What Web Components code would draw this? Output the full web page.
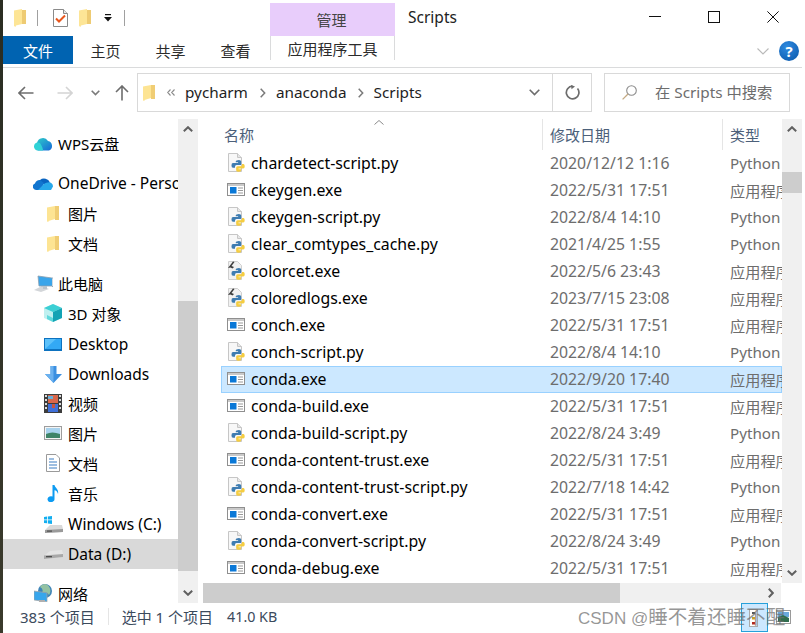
<!DOCTYPE html>
<html lang="zh"><head><meta charset="utf-8"><title>Scripts</title>
<style>
html,body{margin:0;padding:0;width:805px;height:633px;overflow:hidden;background:#fff}
body{font-family:"Noto Sans","Noto Sans CJK SC",sans-serif;font-size:15px;color:#000}
</style></head><body>
<x-explorer></x-explorer>
<script>
const LOGO=`<g transform="translate(2.3 3.1) scale(.78)"><path d="M7 7 Q7 5 11 5 Q14 5 14 7V10 Q14 11.5 12 11.5H8Q6 11.5 6 13.5V15H3.5 Q1.5 15 1.5 12 Q1.5 9 3.5 9H10V8H7Z" fill="#3e7cb1"/><path d="M17 10 Q18.5 10.5 18.5 13 Q18.5 16 16.5 16H10.5V17H14V18 Q14 20 10.5 20 Q7.5 20 7.5 18V15 Q7.5 13 9.5 13H13 Q15 13 15 11V10Z" fill="#f5cd41"/></g>`;
const ICONS={
folder:[12,17,`<path d="M0 2.5 L8 1 V14 L1.5 16 L1.5 17 L0 16.5Z" fill="#fde493"/><path d="M8 1 H12 V15 H8Z" fill="#f0cd74"/>`],
qfolder:[12,18,`<path d="M0 1.5 L8 0 V15 L2 16.5 L1.5 18 L0 17Z" fill="#fde596"/><path d="M8 1 H12 V15 H8Z" fill="#eecb73"/>`],
check:[15,18,`<path d="M.5.5H10.5L14.5 4.5V17.5H.5Z" fill="#fff" stroke="#8a8a8a"/><path d="M10.5.5V4.5H14.5" fill="#e8e8e8" stroke="#8a8a8a"/><path d="M3 9.5 L6 12.5 L12 6.5" fill="none" stroke="#e8561c" stroke-width="2"/>`],
wps:[19,15,`<defs><linearGradient id="g" x1="0" y1="0" x2="1" y2="1"><stop offset="0" stop-color="#2ed0c8"/><stop offset="1" stop-color="#1668d8"/></linearGradient></defs><path d="M4 14.5A4 4 0 0 1 3 7 6 6 0 0 1 14 5 5 5 0 0 1 15 14.5Z" fill="url(#g)"/><path d="M0 10 A4 4 0 0 1 6 7 C8 10 9 13 9 14.5H4A4 4 0 0 1 0 10Z" fill="#2fd2d6"/>`],
onedrive:[20,13,`<path d="M7 3 A6.5 6.5 0 0 1 17 5.5 L12 8 L7 6Z" fill="#0a64c0"/><path d="M3 13A3.3 3.3 0 0 1 2 6.6 5 5 0 0 1 7 3 L11 6 L8 13Z" fill="#1175cf"/><path d="M5 13 L11 7 A5 5 0 0 1 15 5.5 A4 4 0 0 1 20 9.5 L18 13Z" fill="#28a8ea"/>`],
pc:[19,17,`<path d="M0 15 L8 11 L15 14 L7 17Z" fill="#d3d6d9"/><path d="M4 1 L18 3 V11 L5 11Z" fill="#3aa5ea"/><path d="M4 1 L18 3 L19 3 V12 L18 11 H5Z" fill="none" stroke="#8ca0b0" stroke-width=".8"/><path d="M9 11 H13 V14 H9Z" fill="#b9c3cb"/>`],
cube:[18,18,`<path d="M9 0 L18 4 V14 L9 18 L0 14 V4Z" fill="#bff0f0"/><path d="M9 0 L18 4 L9 8 L0 4Z" fill="#3ccfd4"/><path d="M9 8 L18 4 V14 L9 18Z" fill="#13a3b4"/><path d="M3 11 L9 14 V18 L3 15Z" fill="#60d9dc"/>`],
desktop:[18,13,`<rect width="18" height="13" fill="#0d72bf"/><rect x="1" y="1" width="16" height="10" fill="#33a9f5"/><path d="M1 11 L12 1 H1Z" fill="#5cc1fa"/>`],
down:[17,17,`<path d="M5.5 0 H11.5 V8 H17 L8.5 17 L0 8 H5.5Z" fill="#3b8fe0"/><path d="M5.5 0 H8.5 V17 L0 8 H5.5Z" fill="#6bb1ef"/>`],
video:[18,19,`<rect width="18" height="19" fill="#3d3d3d"/><g fill="#ddd"><rect x="1" y="1" width="2" height="2"/><rect x="1" y="5" width="2" height="2"/><rect x="1" y="9" width="2" height="2"/><rect x="1" y="13" width="2" height="2"/><rect x="15" y="1" width="2" height="2"/><rect x="15" y="5" width="2" height="2"/><rect x="15" y="9" width="2" height="2"/><rect x="15" y="13" width="2" height="2"/></g><rect x="4" y="1" width="10" height="8" fill="#d9674a"/><rect x="4" y="2" width="5" height="3" fill="#6bb0d9"/><rect x="4" y="10" width="10" height="8" fill="#3f6fd8"/><rect x="8" y="10" width="3" height="4" fill="#c7543d"/>`],
picture:[18,14,`<rect x=".5" y=".5" width="17" height="13" fill="#f5f5f5" stroke="#9d9d9d"/><path d="M2 2H16V8H2Z" fill="#a9d3ee"/><path d="M2 8 Q8 5 16 8V12H2Z" fill="#3f8468"/>`],
doc:[14,18,`<path d="M.5.5H10L13.5 4V17.5H.5Z" fill="#fff" stroke="#9a9a9a"/><path d="M3 5H8M3 8H11M3 11H11M3 14H11" stroke="#3d7fc4" stroke-width="1.2"/>`],
music:[12,17,`<path d="M5.5 0 H7.5 C8 3 12 4 11 9 C10.5 6.5 9 5.5 7.5 5.2 V14 A3.5 3 0 1 1 5.5 11.5Z" fill="#0d9bf2"/>`],
winc:[19,17,`<path d="M0 1 L3 .5V3.5H0ZM3.8.4 L8 0V3.5H3.8ZM0 4.3H3V7.3L0 7ZM3.8 4.3H8V8L3.8 7.5Z" fill="#12aef0"/><path d="M1 14 L6 9H18L19 13V16L1 17Z" fill="#d9d9d9"/><path d="M1 14 L19 13V16L1 17Z" fill="#9a9a9a"/><rect x="3" y="14.5" width="5" height="1.2" fill="#4d4d4d"/>`],
drive:[19,9,`<path d="M1 5 L6 1 L18 0 L19 4 V7 L1 9Z" fill="#e4e4e4"/><path d="M0 5.5 L19 4 V7 L0 9Z" fill="#a8a8a8"/><rect x="2" y="6" width="6" height="1.3" fill="#4d4d4d"/>`],
network:[18,18,`<circle cx="11" cy="7" r="7" fill="#3f85b8"/><path d="M6 3 Q10 5 8 9 Q13 7 15 11 A7 7 0 0 0 11 0 Q7 .5 6 3Z" fill="#93c2a3"/><rect x="0" y="7" width="13" height="9" fill="#37a6ec" stroke="#a4a4a4" stroke-width=".7" transform="skewY(8)"/><rect x="5" y="16" width="6" height="2" fill="#b0b0b0"/>`],
py:[17,19,`<path d="M.5.5H9.5L13.5 4.5V18.5H.5Z" fill="#f7f7f7" stroke="#c6c6c6"/><path d="M9.5.5V4.5H13.5" fill="#e6e6e6" stroke="#c6c6c6"/>`+LOGO],
pyx:[17,19,`<path d="M.5.5H9.5L13.5 4.5V18.5H.5Z" fill="#f1f1f1" stroke="#cfcfcf"/>`+LOGO+`<path d="M0 7 L5 .5 L6.5 1 L3.5 5 L6 6 L4.5 7.5 L2.5 6.5Z" fill="#3d3d3d"/>`],
exe:[18,13,`<rect x=".5" y=".5" width="17" height="12" fill="#fff" stroke="#8f8f8f"/><rect x="1" y="1" width="16" height="2" fill="#c9c9c9"/><rect x="3" y="4" width="6.5" height="6.5" fill="#0a78d7"/><path d="M11 5H16M11 7.5H16M11 10H16" stroke="#9a9a9a"/>`],
detail:[9,18,`<rect x=".5" y=".5" width="8" height="17" fill="#fff" stroke="#aaa"/><rect x="3" y="3" width="3" height="2" fill="#555"/><rect x="3" y="8" width="3" height="2.5" fill="#c9a227"/><rect x="3" y="13" width="3" height="2.5" fill="#b22a1c"/>`],
thumb:[15,14,`<rect x=".5" y=".5" width="14" height="13" fill="#fff" stroke="#9a9a9a"/><path d="M2 2H13V7H2Z" fill="#6aa9dc"/><path d="M2 7 L7 5 L13 8 V12H2Z" fill="#2f6d4f"/>`],
back:[16,14,`<path d="M7 1 L1 7 L7 13 M1 7 H15.5" fill="none" stroke="#6d6d6d" stroke-width="1.6"/>`],
fwd:[16,14,`<path d="M9 1 L15 7 L9 13 M15 7 H.5" fill="none" stroke="#d4d4d4" stroke-width="1.6"/>`],
up:[14,16,`<path d="M1 7 L7 1 L13 7 M7 1 V15.5" fill="none" stroke="#6d6d6d" stroke-width="1.6"/>`],
cdown:[9,6,`<path d="M.7.7 L4.5 4.5 L8.3.7" fill="none" stroke="#7a7a7a" stroke-width="1.6"/>`],
cdownL:[11,7,`<path d="M.7.7 L5.5 5.5 L10.3.7" fill="none" stroke="#6d6d6d" stroke-width="1.6"/>`],
cright:[6,10,`<path d="M.7.7 L4.7 5 L.7 9.3" fill="none" stroke="#7a7a7a" stroke-width="1.5"/>`],
dbl:[8,7,`<path d="M3.5.5 L.7 3.5 L3.5 6.5 M7.5.5 L4.7 3.5 L7.5 6.5" fill="none" stroke="#8a8a8a" stroke-width="1.1"/>`],
refresh:[15,15,`<path d="M12.5 3.5 A6.3 6.3 0 1 1 7.5 1.2" fill="none" stroke="#6d6d6d" stroke-width="1.7"/><path d="M6 0 L10 1.5 L6.5 4.2Z" fill="#6d6d6d"/>`],
search:[15,15,`<circle cx="9.5" cy="5.5" r="4.8" fill="none" stroke="#8c8c8c" stroke-width="1.1"/><path d="M6 9 L.6 14.4" stroke="#c4a983" stroke-width="1.3"/>`],
min:[12,1,`<rect width="12" height="1" fill="#111"/>`],
max:[12,12,`<rect x=".5" y=".5" width="11" height="11" fill="none" stroke="#111"/>`],
close:[12,12,`<path d="M.4.4 L11.6 11.6 M11.6.4 L.4 11.6" stroke="#111" stroke-width="1"/>`],
ribbonchev:[12,7,`<path d="M.5.5 L6 6 L11.5.5" fill="none" stroke="#b9b9b9" stroke-width="1.1"/>`],
qadrop:[8,8,`<rect x="1" y="0" width="6" height="1.2" fill="#111"/><path d="M0 3H8L4 7.5Z" fill="#111"/>`],
sortup:[10,5,`<path d="M.5 4.5 L5 .5 L9.5 4.5" fill="none" stroke="#8a8a8a"/>`],
scrollup:[10,6,`<path d="M.8 5.2 L5 1.2 L9.2 5.2" fill="none" stroke="#606060" stroke-width="2"/>`],
scrolldown:[10,6,`<path d="M.8.8 L5 4.8 L9.2.8" fill="none" stroke="#606060" stroke-width="2"/>`],
scrollright:[6,10,`<path d="M.8.8 L4.8 5 L.8 9.2" fill="none" stroke="#606060" stroke-width="2"/>`]
};
function def(name,css,html,init){
  customElements.define(name,class extends HTMLElement{
    connectedCallback(){
      if(this.shadowRoot)return;
      const r=this.attachShadow({mode:"open"});
      r.innerHTML=`<style>${css}</style>`+(typeof html==="function"?html(this):html);
      if(init)init(this,r);
    }
  });
}
const ic=(n,s="")=>`<x-icon name="${n}" style="${s}"></x-icon>`;
def("x-icon",":host{display:inline-flex;flex:none;line-height:0}svg{display:block}",h=>{
  const [w,hh,p]=ICONS[h.getAttribute("name")];
  return `<svg width="${w}" height="${hh}" viewBox="0 0 ${w} ${hh}">${p}</svg>`;
});

def("x-help",`
:host{display:flex;width:20px;height:20px;border-radius:50%;flex:none;align-items:center;justify-content:center;
 background:radial-gradient(circle at 40% 30%,#2e8ae0,#0a56a8);color:#fff;font:700 15px/20px "Noto Sans",sans-serif}
`,`<slot></slot>`);

def("x-titlebar",`
:host{display:flex;height:36px;align-items:center;background:#fff}
.qa{display:flex;align-items:center;width:264px;padding-left:11px;box-sizing:border-box;height:36px}
.sep{width:1px;height:16px;background:#a0a0a0}
.ctx{width:125px;height:33px;margin-top:3px;background:#e8cdfb;display:flex;align-items:center;justify-content:center;color:#444;font-size:15px;box-sizing:border-box;padding-right:2px;margin-left:3px}
.t{margin-left:13px;font-size:15.5px;color:#222;flex:1;margin-top:-2px}
.wb{display:flex;width:176px;height:36px;align-items:center;box-sizing:border-box;padding-bottom:3px}
.wb div{width:58.7px;display:flex;justify-content:center}
`,`<div class="qa">${ic("qfolder")}<span class="sep" style="margin-left:11px"></span>${ic("check","margin-left:15px")}${ic("qfolder","margin-left:11px")}${ic("qadrop","margin-left:13px")}<span class="sep" style="margin-left:12px"></span></div>
<div class="ctx">管理</div><div class="t">Scripts</div>
<div class="wb"><div>${ic("min")}</div><div>${ic("max")}</div><div>${ic("close")}</div></div>`);

def("x-tabs",`
:host{display:flex;height:32px;box-sizing:border-box;border-bottom:1px solid #dadbdc;background:#fff;align-items:flex-start;font-size:15px;color:#2b2b2b}
.f{width:70px;height:28px;background:#0063b1;color:#fff;display:flex;align-items:center;justify-content:center}
.tab{height:28px;display:flex;align-items:center;width:65px;justify-content:center}
.ctx{width:125px;height:24px;border:1px solid #dadbdc;border-top:0;border-bottom:0;box-sizing:border-box;display:flex;align-items:center;justify-content:center}
.r{flex:1;display:flex;justify-content:flex-end;align-items:center;height:30px}
`,`<div class="f">文件</div><div class="tab">主页</div><div class="tab">共享</div><div class="tab">查看</div><div style="width:2px"></div><div class="ctx">应用程序工具</div>
<div class="r">${ic("ribbonchev")}<x-help style="margin-left:10px;margin-right:3px">?</x-help></div>`);

def("x-addressbar",`
:host{display:flex;height:51px;box-sizing:border-box;padding-top:5px;background:#fff;align-items:flex-start}
.nav{width:134px;height:39px;display:flex;align-items:center;padding-left:15px;box-sizing:border-box}
.addr{width:455px;height:39px;border:1px solid #d9d9d9;box-sizing:border-box;display:flex;align-items:center;color:#1e1e1e;font-size:15.3px}
.x{margin-top:-2px}
.gr{flex:1}
.d{width:39px;height:37px;border-left:1px solid #d9d9d9;display:flex;align-items:center;justify-content:center;padding-left:1px;box-sizing:border-box}
.s{width:186px;height:39px;margin-left:12px;border:1px solid #d9d9d9;box-sizing:border-box;display:flex;align-items:center;color:#6d6d6d;font-size:15.3px;padding-left:17px}
`,`<div class="nav">${ic("back")}${ic("fwd","margin-left:23px")}${ic("cdown","margin-left:18px")}${ic("up","margin-left:15px")}</div>
<div class="addr">${ic("folder","margin-left:5px")}${ic("dbl","margin-left:12px")}<span class="x" style="margin-left:10px">pycharm</span>${ic("cright","margin-left:12px;margin-right:10px")}<span class="x">anaconda</span>${ic("cright","margin-left:11px;margin-right:10px")}<span class="x">Scripts</span><span class="gr"></span>${ic("cdownL","margin-right:12px")}<span class="d">${ic("refresh")}</span></div>
<div class="s">${ic("search")}<span class="x" style="margin-left:18px;margin-top:-3px">在 Scripts 中搜索</span></div>`);

def("x-nav-item",`
:host{display:flex;height:30px;align-items:center;box-sizing:border-box;font-size:15px;color:#000;white-space:nowrap;overflow:hidden;padding-bottom:2px}
:host([selected]){background:#d9d9d9}
:host([group]){margin-top:10px}
.b{width:20px;display:flex;justify-content:center;flex:none;margin-right:5px}
`,h=>`<div class="b">${ic(h.getAttribute("icon"))}</div><slot></slot>`,
h=>{h.style.paddingLeft=(h.hasAttribute("sub")?40:30)+"px";if(/^[\x00-\x7f]+$/.test(h.textContent)){h.style.fontSize="15.5px";if(h.hasAttribute("sub"))h.style.paddingBottom="0"}});

def("x-scrollbar",`
:host{display:flex;background:#f0f0f0;box-sizing:border-box;flex:none;overflow:hidden}
:host([v]){flex-direction:column;width:20px}
:host([h]){flex-direction:row;height:20px}
.a{flex:none;display:flex;align-items:center;justify-content:center}
:host([v]) .a{height:20px}:host([h]) .a{width:20px}
.th{background:#cdcdcd;flex:none}.sp{flex:1}
`,h=>{
  const v=h.hasAttribute("v"),a=+h.getAttribute("before"),s=+h.getAttribute("size");
  return v?`<div class="a">${ic("scrollup")}</div><div style="height:${a}px;flex:none"></div><div class="th" style="height:${s}px"></div><div class="sp"></div><div class="a">${ic("scrolldown")}</div>`
  :`<div class="th" style="width:${s}px"></div><div class="sp"></div><div class="a">${ic("scrollright")}</div>`;
});

def("x-sidebar",`
:host{display:block;width:175px;overflow:hidden;padding-top:10px;box-sizing:border-box;flex:none;background:#fff}
`,`<slot></slot>`);

def("x-file-row",`
:host{display:grid;grid-template-columns:329px 180px 1fr;height:27px;width:561px;box-sizing:border-box;align-items:center;white-space:nowrap;overflow:hidden;padding-bottom:2px}
:host([selected]){background:#cce8ff;box-shadow:inset 0 0 0 1px #99d1ff}
.n{display:flex;align-items:center;color:#000;font-size:15.85px}
.i{width:18px;margin:0 6px;display:flex;justify-content:center;flex:none}
.d{color:#6d6d6d;font-size:15.8px}
.y{color:#6d6d6d;font-size:15.2px}
`,h=>`<div class="n"><span class="i">${ic(h.getAttribute("icon"))}</span>${h.getAttribute("label")}</div><div class="d">${h.getAttribute("date")}</div><div class="y">${h.getAttribute("kind")}</div>`);

def("x-list-header",`
:host{display:grid;grid-template-columns:339px 180px 1fr;height:31px;font-size:15px;color:#4c607a;position:relative;box-sizing:border-box;flex:none}
.c{display:flex;align-items:center;height:31px;padding-left:21px;box-sizing:border-box;white-space:nowrap}
.c+.c{border-left:1px solid #e5e5e5;padding-left:7px}
.s{position:absolute;left:171px;top:1px;display:flex}
`,`<div class="c">名称</div><div class="c">修改日期</div><div class="c">类型</div><span class="s">${ic("sortup")}</span>`);

def("x-filelist",`
:host{display:flex;flex-direction:column;flex:1;min-width:0}
.top{display:flex;height:464px}
.area{flex:1;display:flex;flex-direction:column;overflow:hidden;min-width:0}
.rows{padding-left:18px;overflow:hidden}
.bot{display:flex}
.bot x-scrollbar{width:578px}
`,`<div class="top"><div class="area"><x-list-header></x-list-header><div class="rows"><slot></slot></div></div><x-scrollbar v before="33" size="21"></x-scrollbar></div>
<div class="bot"><x-scrollbar h size="417"></x-scrollbar></div>`);

def("x-statusbar",`
:host{display:flex;height:30px;align-items:center;font-size:15px;color:#3b4a5c;background:#fff;position:relative;white-space:nowrap;padding-left:17px;padding-bottom:3px;box-sizing:border-box}
.sep{width:1px;height:17px;background:#e5e5e5;margin:0 13px}
.view{position:absolute;left:738px;top:0;width:27px;height:29px;background:#cce8ff;border:1px solid #26a0da;box-sizing:border-box;display:flex;align-items:center;justify-content:center;padding-right:3px}
.thumb{position:absolute;left:773px;top:7px;display:flex}
.wm{position:absolute;left:575px;top:-1px;color:rgba(110,110,110,.72);font-family:"Liberation Sans","Noto Sans CJK SC",sans-serif;font-size:19.6px;line-height:30px;pointer-events:none;z-index:2}
.wm b{font-weight:400;font-size:17px}
`,`<span>383 个项目</span><span class="sep"></span><span>选中 1 个项目</span><span style="margin-left:14px;font-size:14.3px">41.0 KB</span>
<div class="view">${ic("detail")}</div><div class="thumb">${ic("thumb")}</div>
<div class="wm"><b>CSDN @</b>睡不着还睡不醒</div>`);

def("x-explorer",`
:host{display:block;width:805px;height:633px;position:relative;box-sizing:border-box;padding-left:3px;padding-right:3px;
 background:linear-gradient(#2a2d22,#3a3a2c) left/3px 100% no-repeat,#fff}
.main{display:flex;height:484px}
.gap{width:5px;flex:none;background:#fff}
`,`<x-titlebar></x-titlebar><x-tabs></x-tabs><x-addressbar></x-addressbar>
<div class="main"><x-sidebar id="sb"></x-sidebar><x-scrollbar v before="162" size="270"></x-scrollbar><div class="gap"></div><x-filelist id="fl"></x-filelist></div>
<x-statusbar></x-statusbar>`,(h,r)=>{
  const nav=[["wps","WPS云盘",0,0],["onedrive","OneDrive - Personal",0,1],["folder","图片",1,0],["folder","文档",1,0],["pc","此电脑",0,1],["cube","3D 对象",1,0],["desktop","Desktop",1,0],["down","Downloads",1,0],["video","视频",1,0],["picture","图片",1,0],["doc","文档",1,0],["music","音乐",1,0],["winc","Windows (C:)",1,0],["drive","Data (D:)",1,0,1],["network","网络",0,1]];
  const sb=r.getElementById("sb");
  nav.forEach(n=>{const e=document.createElement("x-nav-item");e.setAttribute("icon",n[0]);e.textContent=n[1];if(n[2])e.setAttribute("sub","");if(n[3])e.setAttribute("group","");if(n[4])e.setAttribute("selected","");sb.appendChild(e)});
  const P="Python File",A="应用程序";
  const files=[["py","chardetect-script.py","2020/12/12 1:16",P],["exe","ckeygen.exe","2022/5/31 17:51",A],["py","ckeygen-script.py","2022/8/4 14:10",P],["py","clear_comtypes_cache.py","2021/4/25 1:55",P],["pyx","colorcet.exe","2022/5/6 23:43",A],["pyx","coloredlogs.exe","2023/7/15 23:08",A],["exe","conch.exe","2022/5/31 17:51",A],["py","conch-script.py","2022/8/4 14:10",P],["exe","conda.exe","2022/9/20 17:40",A,1],["exe","conda-build.exe","2022/5/31 17:51",A],["py","conda-build-script.py","2022/8/24 3:49",P],["exe","conda-content-trust.exe","2022/5/31 17:51",A],["py","conda-content-trust-script.py","2022/7/18 14:42",P],["exe","conda-convert.exe","2022/5/31 17:51",A],["py","conda-convert-script.py","2022/8/24 3:49",P],["exe","conda-debug.exe","2022/5/31 17:51",A]];
  const fl=r.getElementById("fl");
  files.forEach(f=>{const e=document.createElement("x-file-row");e.setAttribute("icon",f[0]);e.setAttribute("label",f[1]);e.setAttribute("date",f[2]);e.setAttribute("kind",f[3]);if(f[4])e.setAttribute("selected","");fl.appendChild(e)});
});
</script>
</body></html>
